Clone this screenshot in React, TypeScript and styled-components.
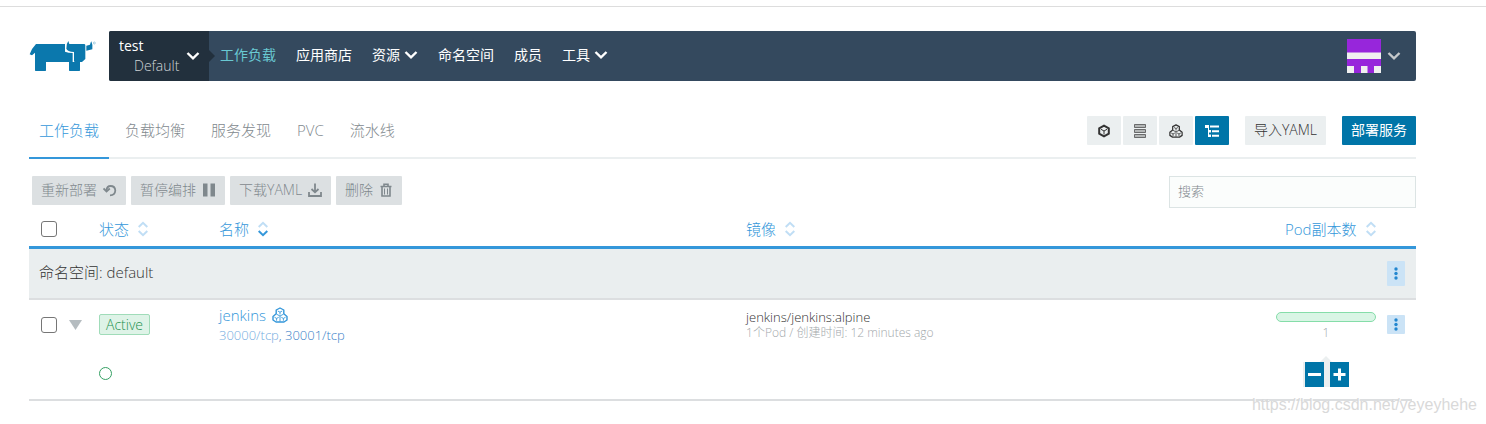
import React from "react";
import styled, { createGlobalStyle, css } from "styled-components";

const blue = "#3497da";
const primary = "#0075a8";
const pale = "#ebeff0";

const GlobalStyle = createGlobalStyle`
  * { box-sizing: border-box; }
  body {
    margin: 0;
    background: #fff;
    color: #444;
    font-family: "Open Sans", "Noto Sans CJK SC", sans-serif;
    font-size: 14px;
    font-weight: 300;
    line-height: 20px;
  }
  button, input { font: inherit; }
  button { cursor: pointer; }
  a { color: inherit; text-decoration: none; }
  svg { display: block; flex: none; }
`;

const Page = styled.div`
  position: relative;
  padding: 6px 0 22px;
`;
const Content = styled.div`
  padding: 24px 70px 0 29px;
  border-top: 1px solid #ddd;
`;

const Header = styled.header`
  display: flex;
  align-items: center;
`;
const LogoLink = styled.a`
  width: 80px;
`;
const NavBar = styled.div`
  display: flex;
  flex: 1;
  align-items: center;
  height: 50px;
  overflow: hidden;
  border-radius: 2px;
  background: #34495e;
  color: #fff;
`;
const Switcher = styled.button`
  display: flex;
  align-items: center;
  justify-content: space-between;
  align-self: stretch;
  width: 100px;
  padding: 0 9px 0 10px;
  border: 0;
  background: #22303d;
  color: #fff;
  text-align: left;
`;
const Cluster = styled.span`
  display: block;
  font-weight: 400;
`;
const Project = styled.span`
  display: block;
  padding-left: 15px;
  color: #d0d4d7;
`;
const Pointer = styled.span`
  border: 6px solid transparent;
  border-left-color: #22303d;
  border-right: 0;
`;
const Nav = styled.nav`
  display: flex;
  flex: 1;
  gap: 20px;
  padding: 0 0 2px 5px;
  font-weight: 400;
`;
const NavLink = styled.a<{ $active?: boolean }>`
  display: flex;
  align-items: center;
  gap: 4px;
  color: ${(p) => (p.$active ? "#69c8d2" : "#fff")};
`;
const UserButton = styled.button`
  display: flex;
  align-items: center;
  gap: 6px;
  padding: 0 15px 0 0;
  border: 0;
  background: none;
  color: #c5c8ca;
`;

const TabRow = styled.div`
  display: flex;
  align-items: flex-end;
  justify-content: space-between;
  height: 78px;
  border-bottom: 2px solid ${pale};
`;
const Tabs = styled.nav`
  display: flex;
  gap: 6px;
  margin-bottom: -2px;
`;
const Tab = styled.a<{ $active?: boolean }>`
  padding: 0 10px 17px;
  border-bottom: 2px solid ${(p) => (p.$active ? blue : "transparent")};
  color: ${(p) => (p.$active ? blue : "#7f898e")};
  font-size: 15px;
`;
const Actions = styled.div`
  display: flex;
  gap: 16px;
  padding-bottom: 12px;
`;
const ViewModes = styled.div`
  display: flex;
  gap: 2px;
`;
const Button = styled.button<{ $kind?: "primary" | "muted" }>`
  display: flex;
  align-items: center;
  justify-content: center;
  gap: 6px;
  height: 29px;
  padding: 0 9px 2px;
  border: 0;
  border-radius: 1px;
  background: ${pale};
  color: #333;
  ${(p) => p.$kind === "primary" && css`background: ${primary}; color: #fff; font-weight: 400;`}
  ${(p) => p.$kind === "muted" && css`background: #dce0e2; color: #7f888d;`}
`;
const ModeButton = styled(Button)`
  width: 34px;
  padding: 0;
`;

const Toolbar = styled.div`
  display: flex;
  align-items: flex-start;
  justify-content: space-between;
  padding: 17px 0 4px 3px;
`;
const BulkActions = styled.div`
  display: flex;
  gap: 5px;
`;
const Search = styled.input`
  width: 247px;
  height: 32px;
  padding: 0 8px 2px;
  border: 1px solid #dce4e4;
  border-radius: 0;
  background: #fbfdfc;
  font-size: 13px;
  &::placeholder { color: #7f888d; opacity: 1; }
`;

const Table = styled.table`
  width: 100%;
  table-layout: fixed;
  border-collapse: collapse;
  th, td { padding: 0; text-align: left; font-weight: 300; }
`;
const Col = styled.col<{ $width?: string }>`
  width: ${(p) => p.$width ?? "auto"};
`;
const HeadRow = styled.tr`
  height: 35px;
  border-bottom: 3px solid ${blue};
`;
const SortButton = styled.button<{ $indent?: boolean }>`
  display: flex;
  align-items: center;
  gap: 9px;
  padding: 0 0 0 ${(p) => (p.$indent ? "20px" : "0")};
  border: 0;
  background: none;
  color: ${blue};
  font-size: 15px;
`;
const GroupRow = styled.tr`
  height: 52px;
  border-bottom: 2px solid #dcdee0;
  background: #eaeeef;
`;
const GroupTitle = styled.div`
  padding: 0 0 2px 10px;
  color: #333;
  font-size: 15px;
`;
const ItemRow = styled.tr`
  height: 50px;
`;
const CheckCell = styled.div`
  display: flex;
  align-items: center;
  gap: 12px;
  padding-left: 12px;
`;
const Checkbox = styled.input`
  appearance: none;
  width: 16px;
  height: 16px;
  margin: 0;
  border: 1px solid #767676;
  border-radius: 3px;
  background: #fff;
`;
const Expander = styled.button`
  padding: 0;
  border: 0;
  background: none;
  color: #b5bcc0;
`;
const Badge = styled.span`
  display: inline-block;
  height: 21px;
  padding: 0 6px;
  border: 1px solid #a0dcb9;
  border-radius: 2px;
  background: #def3e7;
  color: #23914f;
  line-height: 19px;
`;
const NameLine = styled.a`
  display: flex;
  align-items: center;
  gap: 6px;
  color: ${blue};
  font-size: 15px;
`;
const Ports = styled.div`
  color: #3a7fc8;
  font-size: 13px;
`;
const FadedLink = styled.a`
  color: #75ade0;
`;
const Image = styled.div`
  color: #333;
  font-size: 13px;
  line-height: 15px;
`;
const Meta = styled.div`
  color: #a3a8ab;
  font-size: 12px;
  line-height: 15px;
`;
const Scale = styled.div`
  display: flex;
  flex-direction: column;
  align-items: center;
  padding-top: 7px;
  color: #a3a8ab;
  font-size: 12px;
  line-height: 22px;
`;
const Bar = styled.div`
  width: 100px;
  height: 10px;
  border: 1px solid #85dda9;
  border-radius: 5px;
  background: #d9f5e5;
`;
const MenuButton = styled.button<{ $small?: boolean }>`
  display: grid;
  place-items: center;
  width: 18px;
  height: ${(p) => (p.$small ? "19px" : "25px")};
  padding: 0;
  border: 0;
  border-radius: 1px;
  background: #cbe3f6;
  color: #2286cf;
`;
const Detail = styled.div`
  display: flex;
  align-items: center;
  justify-content: space-between;
  height: 52px;
  margin-right: 4px;
  padding: 0 63px 1px 70px;
  border-bottom: 2px solid #dcdee0;
`;
const PodDot = styled.span`
  width: 13px;
  height: 13px;
  border: 1px solid #35a063;
  border-radius: 50%;
`;
const Stepper = styled.div`
  display: flex;
  flex-direction: column;
  align-items: center;
  padding-bottom: 4px;
`;
const StepCaret = styled.span`
  border: 6px solid transparent;
  border-top: 0;
  border-bottom-color: ${pale};
`;
const StepButtons = styled.div`
  display: flex;
  gap: 6px;
  padding-left: 2px;
  background: ${pale};
`;
const StepButton = styled.button`
  display: grid;
  place-items: center;
  width: 19px;
  height: 25px;
  padding: 0;
  border: 0;
  background: ${primary};
  color: #fff;
`;
const Watermark = styled.div`
  position: absolute;
  right: 9px;
  bottom: 8px;
  color: #d9d9d9;
  font-family: "Liberation Sans", sans-serif;
  font-size: 16px;
  font-weight: 400;
  line-height: 20px;
  text-shadow: 1px 1px 0 #fff;
`;

const Logo = () => (
  <svg width="68" height="34" viewBox="0 0 204 102" fill="#0b78ad">
    <path d="M21 15H108V38Q118 42 131 42V69H153V94Q153 96 151 96H122Q120 96 120 94V69H51V94Q51 96 49 96H20Q18 96 18 94V41L9 49L2 46Q8 28 21 15Z" />
    <path d="M112 29Q111 15 118 6L121 15H165Q169 15 169 19V60L159 69H138Q135 69 135 66V39Q115 38 112 29Z" />
    <path d="M172 20L183 17Q185 10 187 7Q192 18 190 31L172 35Z" />
    <circle cx="196" cy="12" r="3" fill="none" stroke="#7fb9d4" strokeWidth="2" />
  </svg>
);
const Chevron = () => (
  <svg width="14" height="10" viewBox="0 0 14 10" fill="none" stroke="currentColor" strokeWidth="2.4">
    <path d="M1.500 2L7 7.400L12.500 2" />
  </svg>
);
const Avatar = () => (
  <svg width="34" height="34" viewBox="0 0 34 34">
    <path fill="#9726db" d="M0 0H34V34H0Z" />
    <path fill="#f0f0f0" d="M0 13.500H34V20H0ZM0 27H7V34H0ZM14 27H20.500V34H14ZM27 27H34V34H27Z" />
  </svg>
);
const Sort = ({ down }: { down?: boolean }) => (
  <svg width="10" height="16" viewBox="0 0 10 16" fill="none" stroke="#c0def5" strokeWidth="2">
    <path d="M0.700 6L5 1.800L9.300 6" />
    <path d="M0.700 10L5 14.200L9.300 10" stroke={down ? blue : "#c0def5"} />
  </svg>
);
const CubeIcon = () => (
  <svg width="14" height="14" viewBox="0 0 14 14" fill="none" stroke="currentColor">
    <path strokeWidth="2" d="M7 1.600L11.800 4.300V9.700L7 12.400L2.200 9.700V4.300Z" />
    <path strokeWidth="1" d="M4 5.300L7 7L10 5.300M7 7V10.500" />
  </svg>
);
const ServerIcon = () => (
  <svg width="14" height="14" viewBox="0 0 14 14" fill="none" stroke="currentColor">
    <path strokeOpacity="0.700" d="M1.500 0.500H12.500V3.500H1.500ZM1.500 5.500H12.500V8.500H1.500ZM1.500 10.500H12.500V13.500H1.500Z" />
    <path strokeOpacity="0.300" strokeWidth="2" d="M2 2H12M2 7H12M2 12H12" />
  </svg>
);
const PodIcon = ({ size = 14 }: { size?: number }) => (
  <svg width={size} height={size} viewBox="0 0 16 16" fill="none" stroke="currentColor">
    <path strokeWidth="1.400" strokeLinejoin="round" d="M8 1L11.800 3V6.800L15 9.500V13L12 15H4L1 13V9.500L4.200 6.800V3Z" />
    <path strokeWidth="0.900" d="M5.800 4L8 5.200L10.200 4M8 5.200V7.500M4.500 7.200L8 9L11.500 7.200M8 9V14.500M2.500 10.300L4.600 11.400L6.700 10.300M4.600 11.400V13.700M13.500 10.300L11.400 11.400L9.300 10.300M11.400 11.400V13.700" />
  </svg>
);
const TreeIcon = () => (
  <svg width="14" height="14" viewBox="0 0 14 14" fill="currentColor">
    <path d="M0 1H4V4H0ZM5 1.500H14V3.500H5ZM3 6H6V8.500H3ZM7 6.300H14V8.300H7ZM3 10.500H6V13H3ZM7 10.800H14V12.800H7ZM3 4H4V11H3Z" />
  </svg>
);
const UndoIcon = () => (
  <svg width="14" height="14" viewBox="0 0 14 14" fill="none" stroke="currentColor" strokeWidth="1.800">
    <path d="M7 12.300Q12 12.300 12.300 7.500Q12 3 7.500 3Q4 3 3.300 7.500" />
    <path d="M0.500 5.500L3.500 8.500L6.800 5.500" />
  </svg>
);
const PauseIcon = () => (
  <svg width="14" height="14" viewBox="0 0 14 14" fill="currentColor">
    <path d="M1 0.500H5.500V13.500H1ZM8.500 0.500H13V13.500H8.500Z" />
  </svg>
);
const DownloadIcon = () => (
  <svg width="14" height="14" viewBox="0 0 14 14" fill="none" stroke="currentColor" strokeWidth="1.800">
    <path d="M7 0.500V9M3.500 6L7 9.300L10.500 6M1 9V13H13V9" />
  </svg>
);
const TrashIcon = () => (
  <svg width="14" height="14" viewBox="0 0 14 14" fill="none" stroke="currentColor" strokeWidth="1.600">
    <path d="M1.500 3.500H12.500M5 3V1.200H9V3M3 4V13H11V4" />
    <path strokeWidth="1" d="M5.500 5.500V11.500M8.500 5.500V11.500" />
  </svg>
);
const Dots = () => (
  <svg width="4" height="13" viewBox="0 0 4 13" fill="currentColor">
    <circle cx="2" cy="2" r="1.700" />
    <circle cx="2" cy="6.500" r="1.700" />
    <circle cx="2" cy="11" r="1.700" />
  </svg>
);
const Triangle = () => (
  <svg width="13" height="10" viewBox="0 0 13 10" fill="currentColor">
    <path d="M0 0H13L6.500 10Z" />
  </svg>
);
const Step = ({ plus }: { plus?: boolean }) => (
  <svg width="13" height="13" viewBox="0 0 13 13" stroke="currentColor" strokeWidth="3">
    <path d={plus ? "M0.500 6.500H12.500M6.500 0.500V12.500" : "M0 6.500H13"} />
  </svg>
);

const navItems = [
  { label: "工作负载", active: true },
  { label: "应用商店" },
  { label: "资源", menu: true },
  { label: "命名空间" },
  { label: "成员" },
  { label: "工具", menu: true },
];
const tabs = ["工作负载", "负载均衡", "服务发现", "PVC", "流水线"];
const bulk = [
  { label: "重新部署", icon: <UndoIcon /> },
  { label: "暂停编排", icon: <PauseIcon /> },
  { label: "下载YAML", icon: <DownloadIcon /> },
  { label: "删除", icon: <TrashIcon /> },
];

export default function App() {
  return (
    <Page>
      <GlobalStyle />
      <Content>
        <Header>
          <LogoLink href="#" aria-label="Rancher"><Logo /></LogoLink>
          <NavBar>
            <Switcher>
              <span>
                <Cluster>test</Cluster>
                <Project>Default</Project>
              </span>
              <Chevron />
            </Switcher>
            <Pointer />
            <Nav>
              {navItems.map((n) => (
                <NavLink key={n.label} href="#" $active={n.active}>
                  {n.label}
                  {n.menu && <Chevron />}
                </NavLink>
              ))}
            </Nav>
            <UserButton aria-label="User menu"><Avatar /><Chevron /></UserButton>
          </NavBar>
        </Header>

        <TabRow>
          <Tabs>
            {tabs.map((t, i) => (
              <Tab key={t} href="#" $active={i === 0}>{t}</Tab>
            ))}
          </Tabs>
          <Actions>
            <ViewModes>
              <ModeButton aria-label="Containers"><CubeIcon /></ModeButton>
              <ModeButton aria-label="Nodes"><ServerIcon /></ModeButton>
              <ModeButton aria-label="Workloads"><PodIcon /></ModeButton>
              <ModeButton aria-label="Namespaces" $kind="primary"><TreeIcon /></ModeButton>
            </ViewModes>
            <Button>导入YAML</Button>
            <Button $kind="primary">部署服务</Button>
          </Actions>
        </TabRow>

        <Toolbar>
          <BulkActions>
            {bulk.map((b) => (
              <Button key={b.label} $kind="muted">{b.label}{b.icon}</Button>
            ))}
          </BulkActions>
          <Search type="search" placeholder="搜索" aria-label="搜索" />
        </Toolbar>

        <Table>
          <colgroup>
            <Col $width="70px" />
            <Col $width="120px" />
            <Col $width="38%" />
            <Col />
            <Col $width="122px" />
            <Col $width="29px" />
          </colgroup>
          <thead>
            <HeadRow>
              <th><CheckCell><Checkbox type="checkbox" aria-label="Select all" /></CheckCell></th>
              <th><SortButton>状态<Sort /></SortButton></th>
              <th><SortButton>名称<Sort down /></SortButton></th>
              <th><SortButton>镜像<Sort /></SortButton></th>
              <th colSpan={2}><SortButton $indent>Pod副本数<Sort /></SortButton></th>
            </HeadRow>
          </thead>
          <tbody>
            <GroupRow>
              <td colSpan={5}><GroupTitle>命名空间: default</GroupTitle></td>
              <td><MenuButton aria-label="Namespace actions"><Dots /></MenuButton></td>
            </GroupRow>
            <ItemRow>
              <td>
                <CheckCell>
                  <Checkbox type="checkbox" aria-label="Select jenkins" />
                  <Expander aria-label="Collapse"><Triangle /></Expander>
                </CheckCell>
              </td>
              <td><Badge>Active</Badge></td>
              <td>
                <NameLine href="#">jenkins<PodIcon size={16} /></NameLine>
                <Ports><FadedLink href="#">30000/tcp</FadedLink>, <a href="#">30001/tcp</a></Ports>
              </td>
              <td>
                <Image>jenkins/jenkins:alpine</Image>
                <Meta>1个Pod / 创建时间: 12 minutes ago</Meta>
              </td>
              <td><Scale><Bar />1</Scale></td>
              <td><MenuButton $small aria-label="Workload actions"><Dots /></MenuButton></td>
            </ItemRow>
            <tr>
              <td colSpan={6}>
                <Detail>
                  <PodDot />
                  <Stepper>
                    <StepCaret />
                    <StepButtons>
                      <StepButton aria-label="Scale down"><Step /></StepButton>
                      <StepButton aria-label="Scale up"><Step plus /></StepButton>
                    </StepButtons>
                  </Stepper>
                </Detail>
              </td>
            </tr>
          </tbody>
        </Table>
      </Content>
      <Watermark>https://blog.csdn.net/yeyeyhehe</Watermark>
    </Page>
  );
}
